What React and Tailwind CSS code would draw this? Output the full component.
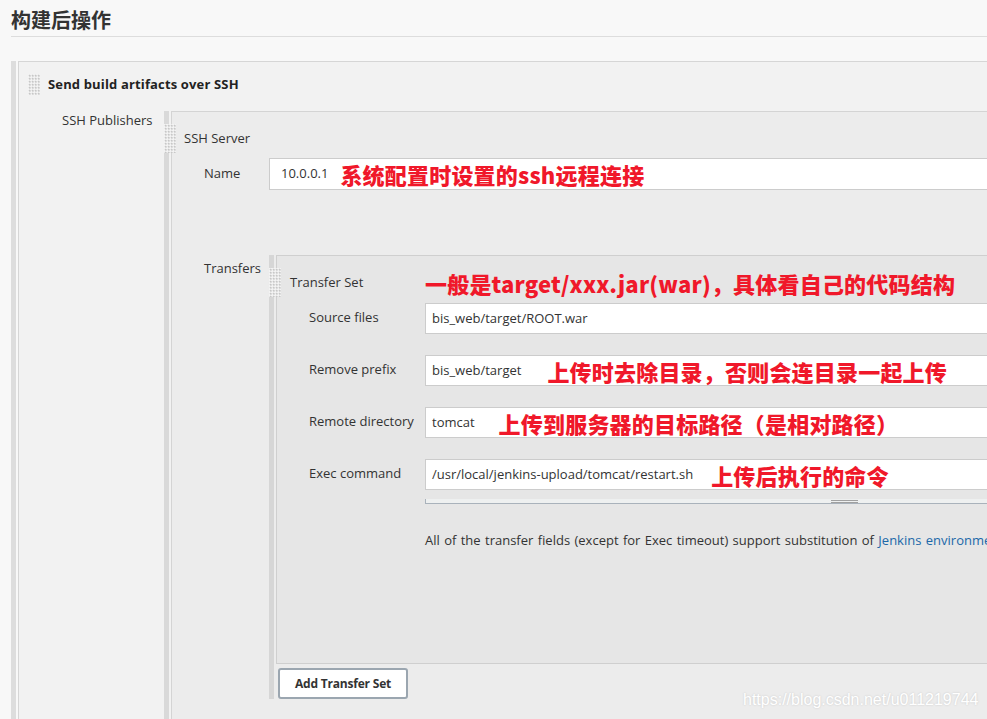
import React from "react";

const FONT = { fontFamily: '"Open Sans", "Noto Sans CJK SC", sans-serif' };
const CJK = { fontFamily: '"Noto Sans CJK SC", "Noto Sans", sans-serif' };

let pid = 0;
function Handle({ h }) {
  const id = React.useMemo(() => "dots" + pid++, []);
  return (
    <svg width="12" height={h} className="block shrink-0">
      <defs>
        <pattern id={id} width="3" height="3" patternUnits="userSpaceOnUse">
          <rect width="3" height="3" fill="#ffffff" />
          <rect x="0.5" y="0.5" width="2" height="2" fill="#d2d2d2" />
          <rect x="1.5" y="1.5" width="1" height="1" fill="#a8a8a8" />
        </pattern>
      </defs>
      <rect width="12" height={h} fill={`url(#${id})`} />
    </svg>
  );
}

function Note({ children, className = "" }) {
  return (
    <span
      className={"whitespace-nowrap text-[22px] font-black leading-[28px] tracking-[0.2px] text-[#f0182a] " + className}
      style={CJK}
    >
      {children}
    </span>
  );
}

function Field({ label, value, note, noteGap }) {
  return (
    <div className="flex items-start">
      <div className="w-[148px] shrink-0 pl-[32px] pt-[5px] leading-[18px]">{label}</div>
      <div className="flex h-[31px] flex-1 items-center border border-[#cccccc] bg-white pl-[6px]">
        <span className="whitespace-nowrap">{value}</span>
        {note && <Note className={noteGap}>{note}</Note>}
      </div>
    </div>
  );
}

export default function App() {
  return (
    <div
      className="relative h-[719px] w-[987px] overflow-hidden bg-[#f8f8f8] text-[13px] text-[#333333]"
      style={FONT}
    >
      <div className="ml-[11px] h-[37px] border-b border-[#dddddd] pt-[6px]">
        <h2 className="text-[20px] font-bold leading-[28px] text-[#333333]" style={CJK}>
          构建后操作
        </h2>
      </div>

      <div className="ml-[11px] mt-[24px] flex h-[700px]">
        <div className="w-[5px] shrink-0 bg-[#dddddd]" />
        <div className="ml-[2px] flex-1 border-l border-t border-[#d6d6d6] bg-[#f2f2f2]">
          <div className="flex items-center pl-[9px] pt-[12px]">
            <Handle h={21} />
            <span className="ml-[8px] font-bold tracking-[0.15px] text-[#222222]">Send build artifacts over SSH</span>
          </div>

          <div className="mt-[16px] flex">
            <div className="w-[145px] shrink-0 pl-[43px] leading-[18px]">SSH Publishers</div>
            <div className="flex flex-1">
              <div className="w-[5px] shrink-0 bg-[#d9d9d9]" />
              <div className="ml-[2px] h-[620px] flex-1 border-l border-t border-[#d4d4d4] bg-[#ececec]">
                <div className="-ml-[8px] flex items-center pt-[12px]">
                  <Handle h={29} />
                  <span className="ml-[8px]">SSH Server</span>
                </div>

                <div className="mt-[5px] flex items-start">
                  <div className="w-[97px] shrink-0 pl-[32px] pt-[6px] leading-[18px]">Name</div>
                  <div className="flex h-[32px] flex-1 items-center border border-[#cccccc] bg-white pl-[11px]">
                    <span className="whitespace-nowrap">10.0.0.1</span>
                    <Note className="ml-[12px]">系统配置时设置的ssh远程连接</Note>
                  </div>
                </div>

                <div className="mt-[65px] flex items-start">
                  <div className="w-[97px] shrink-0 pl-[32px] pt-[4px] leading-[18px]">Transfers</div>
                  <div className="flex flex-1">
                    <div className="w-[5px] shrink-0 bg-[#d6d6d6]" />
                    <div className="ml-[2px] flex flex-1 flex-col">
                      <div className="h-[409px] border-b border-l border-t border-[#cfcfcf] bg-[#e6e6e6]">
                        <div className="-ml-[8px] flex items-center pt-[12px]">
                          <Handle h={29} />
                          <div className="ml-[9px] flex items-center">
                            <span className="w-[135px] shrink-0">Transfer Set</span>
                            <Note>一般是target/xxx.jar(war)，具体看自己的代码结构</Note>
                          </div>
                        </div>

                        <div className="mt-[6px] flex flex-col gap-[21px]">
                          <Field label="Source files" value="bis_web/target/ROOT.war" />
                          <Field
                            label="Remove prefix"
                            value="bis_web/target"
                            note="上传时去除目录，否则会连目录一起上传"
                            noteGap="ml-[26px]"
                          />
                          <Field
                            label="Remote directory"
                            value="tomcat"
                            note="上传到服务器的目标路径（是相对路径）"
                            noteGap="ml-[24px]"
                          />
                          <Field
                            label="Exec command"
                            value="/usr/local/jenkins-upload/tomcat/restart.sh"
                            note="上传后执行的命令"
                            noteGap="ml-[18px]"
                          />
                        </div>

                        <div className="relative ml-[148px] mt-[9px] h-[5px] border-b border-l border-[#a9b2bb] bg-[#eef0f0]">
                          <div className="absolute left-[405px] top-[1px] h-[3px] w-[27px] border-b border-t border-[#a0a0a0]" />
                        </div>

                        <div className="ml-[148px] mt-[27px] whitespace-nowrap leading-[18px] [word-spacing:1px]">
                          All of the transfer fields (except for Exec timeout) support substitution of{" "}
                          <span className="text-[#2068a9]">Jenkins environment variables</span>
                        </div>
                      </div>
                      <button className="ml-[2px] mt-[4px] h-[31px] w-[130px] rounded-[3px] border-2 border-[#9ba6b0] bg-white text-[12px] font-bold tracking-[-0.2px] text-[#333333]">
                        Add Transfer Set
                      </button>
                    </div>
                  </div>
                </div>
              </div>
            </div>
          </div>
        </div>
      </div>

      <div
        className="absolute left-[743px] top-[690px] whitespace-nowrap text-[16px] leading-[20px] text-white [text-shadow:0_0_2px_#c4c4c4]"
        style={{ fontFamily: '"Liberation Sans", Arial, sans-serif' }}
      >
        https://blog.csdn.net/u011219744
      </div>
    </div>
  );
}
